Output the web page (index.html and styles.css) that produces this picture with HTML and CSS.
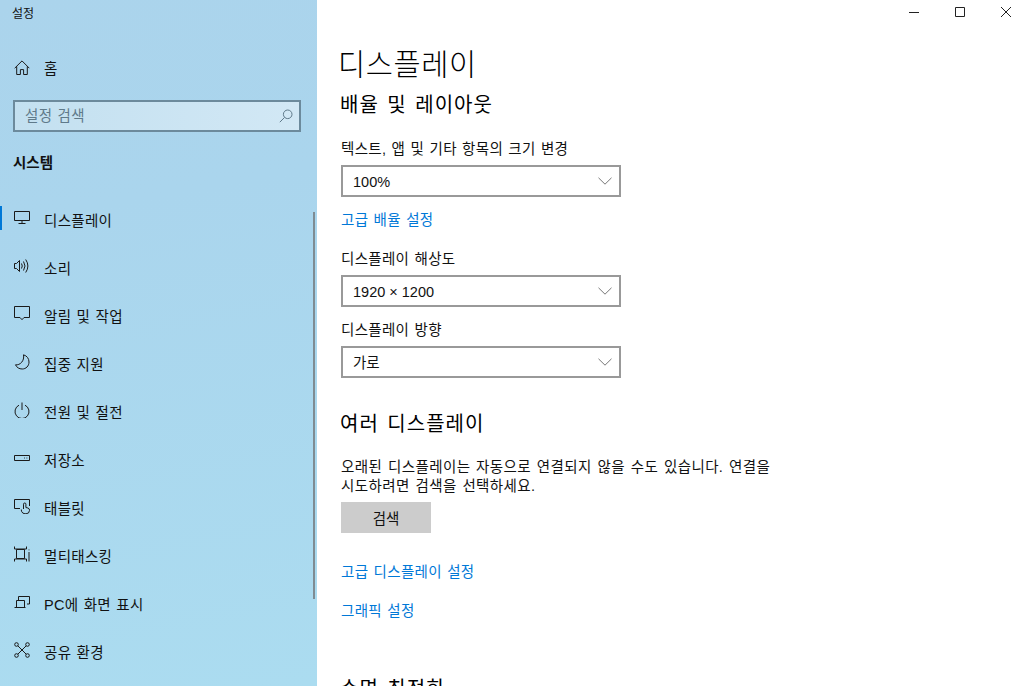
FILE: index.html
```html
<!DOCTYPE html>
<html lang="ko">
<head>
<meta charset="utf-8">
<title>설정</title>
<link rel="stylesheet" href="styles.css">
</head>
<body>
<div class="app">
  <aside class="sidebar">
    <div class="app-title">설정</div>
    <a class="nav-item home">
      <svg class="ico" viewBox="0 0 16 16"><path d="M.7 8.200 8 .9l7.300 7.300M2.700 6.400v8.100h3.700V9.600h3.200v4.900h3.700V6.400"/></svg>
      <span>홈</span>
    </a>
    <div class="search"><span>설정 검색</span>
      <svg class="search-ico" viewBox="0 0 14 14"><circle cx="8.700" cy="5.300" r="4.300"/><path d="M5.600 8.400.8 13.200"/></svg>
    </div>
    <div class="section">시스템</div>
    <nav class="nav">
      <a class="nav-item active">
        <svg class="ico" viewBox="0 0 16 16"><path d="M.5 1.500h15v9H.5zM8 10.500v3M4.500 13.500h7"/></svg>
        <span>디스플레이</span>
      </a>
      <a class="nav-item">
        <svg class="ico" viewBox="0 0 16 16"><path d="M.5 5.500h2L5.500 2.500v11l-3-3h-2zM7.500 5.500q1.500 2.500 0 5M9.500 3.500q3 4.500 0 9M11.700 1.500q4.400 6.500 0 13"/></svg>
        <span>소리</span>
      </a>
      <a class="nav-item">
        <svg class="ico" viewBox="0 0 16 16"><path d="M.5.500h15v11h-5.500L8 13.700 6 11.500H.5z"/></svg>
        <span>알림 및 작업</span>
      </a>
      <a class="nav-item">
        <svg class="ico" viewBox="0 0 16 16"><path d="M9.500.8c3.500 1 5.500 3.800 5.500 7.200 0 4-3 7-6.800 7-3 0-5.500-1.500-6.700-4.200 4.500.7 9.200-4 8-10z"/></svg>
        <span>집중 지원</span>
      </a>
      <a class="nav-item">
        <svg class="ico" viewBox="0 0 16 16"><path d="M5 3.200a7 7 0 1 0 6 0M8 .5v7.500"/></svg>
        <span>전원 및 절전</span>
      </a>
      <a class="nav-item">
        <svg class="ico" viewBox="0 0 16 16"><path d="M.5 5.500h15v5H.5zM10 8h.8M12.500 8h.8"/></svg>
        <span>저장소</span>
      </a>
      <a class="nav-item">
        <svg class="ico" viewBox="0 0 16 16"><path d="M6 10.500H.5v-9h15v6.500M9.500 11V6.200a1.200 1.200 0 0 1 2.400 0V9.500l2 .5q1.600.5 1.600 2v.5a3.500 3.500 0 0 1-3.500 3.300h-1a4 4 0 0 1-3.500-2.500L7.300 11.500"/></svg>
        <span>태블릿</span>
      </a>
      <a class="nav-item">
        <svg class="ico" viewBox="0 0 16 16"><path d="M2.500 3.500h8v9h-8zM.5.500v2.500h12V.5M.5 15.500V13h12v2.500M15 3.500v.8M15 6v9.500"/></svg>
        <span>멀티태스킹</span>
      </a>
      <a class="nav-item">
        <svg class="ico" viewBox="0 0 16 16"><path d="M4.500 6V2.500h11v7.500H13M.5 13.500h11M2.500 13.500V6.500h8v7"/></svg>
        <span>PC에 화면 표시</span>
      </a>
      <a class="nav-item">
        <svg class="ico" viewBox="0 0 16 16"><circle cx="2.500" cy="2.500" r="1.800"/><circle cx="13.500" cy="2.500" r="1.800"/><circle cx="2.500" cy="13.500" r="1.800"/><circle cx="13.500" cy="13.500" r="1.800"/><path d="M3.800 3.800l8.400 8.400M12.200 3.800l-8.400 8.400"/></svg>
        <span>공유 환경</span>
      </a>
    </nav>
    <div class="scrollbar"></div>
  </aside>
  <main class="content">
    <div class="win-controls">
      <svg class="win-ico" viewBox="0 0 12 12"><path d="M1 6.500h10"/></svg>
      <svg class="win-ico" viewBox="0 0 12 12"><path d="M1.500 1.500h9v9h-9z"/></svg>
      <svg class="win-ico" viewBox="0 0 12 12"><path d="M1 1l10 10M11 1 1 11"/></svg>
    </div>
    <h1>디스플레이</h1>
    <h2 class="first">배율 및 레이아웃</h2>
    <div class="label l1">텍스트, 앱 및 기타 항목의 크기 변경</div>
    <div class="select"><span>100%</span><svg class="chev" viewBox="0 0 14 8"><path d="M.5.800 7 7.200 13.500.8"/></svg></div>
    <a class="link l2">고급 배율 설정</a>
    <div class="label l3">디스플레이 해상도</div>
    <div class="select"><span>1920 × 1200</span><svg class="chev" viewBox="0 0 14 8"><path d="M.5.800 7 7.200 13.500.8"/></svg></div>
    <div class="label l4">디스플레이 방향</div>
    <div class="select"><span class="val-ko">가로</span><svg class="chev" viewBox="0 0 14 8"><path d="M.5.800 7 7.200 13.500.8"/></svg></div>
    <h2 class="second">여러 디스플레이</h2>
    <p class="desc">오래된 디스플레이는 자동으로 연결되지 않을 수도 있습니다. 연결을<br>시도하려면 검색을 선택하세요.</p>
    <button class="btn">검색</button>
    <a class="link l5">고급 디스플레이 설정</a>
    <a class="link l6">그래픽 설정</a>
    <h2 class="third">수면 최적화</h2>
  </main>
</div>
</body>
</html>
```
FILE: styles.css
```css
* { box-sizing: border-box; }
html, body { margin: 0; height: 100%; overflow: hidden; }
body {
  font-family: "Liberation Sans", "Noto Sans CJK KR", sans-serif;
  color: #000;
  background: #fff;
}
.app { display: flex; width: 1019px; height: 686px; overflow: hidden; }
.sidebar {
  position: relative;
  width: 317px;
  flex: none;
  background: linear-gradient(170deg, #abd4ec 0%, #aad5ed 30%, #abdcf0 100%);
  color: #111;
}
.app-title { font-size: 12px; line-height: 16px; padding: 6px 0 0 12px; height: 44px; }
.nav-item {
  display: flex;
  align-items: center;
  height: 48px;
  font-size: 14.500px;
  letter-spacing: .3px;
  word-spacing: 1px;
  color: #111;
  position: relative;
}
.nav-item span { padding-top: 2px; }
.nav-item.home span { padding-top: 0; padding-bottom: 2px; }
.nav-item .ico {
  width: 16px; height: 16px;
  margin-left: 14px;
  margin-right: 14px;
  flex: none;
  fill: none;
  stroke: #1a1a1a;
  stroke-width: 1;
}
.nav-item.active::before {
  content: "";
  position: absolute;
  left: 0; top: 12px;
  width: 2px; height: 24px;
  background: #0078d7;
}
.search {
  display: flex;
  align-items: center;
  justify-content: space-between;
  margin: 8px 16px 0 13px;
  height: 32px;
  border: 2px solid #6c8a9c;
  background: linear-gradient(90deg, #c3e0f0, #d2e8f5);
  padding: 0 4px 0 10px;
  font-size: 14.500px;
  letter-spacing: .3px;
  word-spacing: 1px;
  color: #5f7a8a;
}
.search span { padding-bottom: 3px; }
.search-ico { width: 14px; height: 14px; margin-right: 2px; fill: none; stroke: #5f7a8a; stroke-width: 1; }
.section { font-size: 14.500px; font-weight: 700; line-height: 20px; margin: 21px 0 0 13px; height: 41px; color: #111; }
.nav { display: flex; flex-direction: column; }
.scrollbar {
  position: absolute;
  right: 2px; top: 212px;
  width: 2px; height: 387px;
  background: #7f8c93;
}
.content { position: relative; flex: 1; padding: 0 0 0 23px; overflow: hidden; }
.win-controls {
  position: absolute;
  top: 6px; right: 7px;
  display: flex;
  gap: 34px;
}
.win-ico { width: 12px; height: 12px; fill: none; stroke: #222; stroke-width: 1; }
h1 { font-size: 29.500px; font-weight: 300; line-height: 42px; margin: 44px 0 0 -2px; letter-spacing: .6px; }
h2 { font-size: 20px; font-weight: 400; line-height: 30px; margin: 0; letter-spacing: 1px; word-spacing: 2px; }
h2.first { margin-top: 4px; }
.label { font-size: 14.500px; line-height: 24px; letter-spacing: .3px; word-spacing: 1px; color: #111; }
.l1 { margin-top: 17px; margin-left: 1px; }
.select {
  display: flex;
  align-items: center;
  justify-content: space-between;
  width: 280px;
  height: 32px;
  margin: 4px 0 0 1px;
  border: 2px solid #999;
  padding: 0 7px 0 10px;
  font-size: 14.500px;
  color: #111;
}
.select span { padding-top: 2px; }
.select .val-ko { padding-top: 0; padding-bottom: 2px; }
.chev { width: 14px; height: 8px; fill: none; stroke: #777; stroke-width: 1; }
.link { display: block; font-size: 14.500px; line-height: 20px; letter-spacing: .3px; word-spacing: 1px; color: #0078d7; margin-left: 1px; }
.l2 { margin-top: 13px; }
.l3 { margin-top: 17px; margin-left: 1px; }
.l4 { margin-top: 11px; margin-left: 1px; }
h2.second { margin-top: 31px; }
.desc { font-size: 14.500px; line-height: 19px; letter-spacing: .4px; word-spacing: 1.300px; margin: 19px 0 0 1px; color: #111; }
.btn {
  display: block;
  width: 90px; height: 31px;
  margin: 6px 0 0 1px;
  border: 0;
  background: #ccc;
  font: inherit;
  font-size: 14.500px;
  color: #111;
}
.l5 { margin-top: 29px; }
.l6 { margin-top: 19px; }
h2.third { margin-top: 53px; }
```
